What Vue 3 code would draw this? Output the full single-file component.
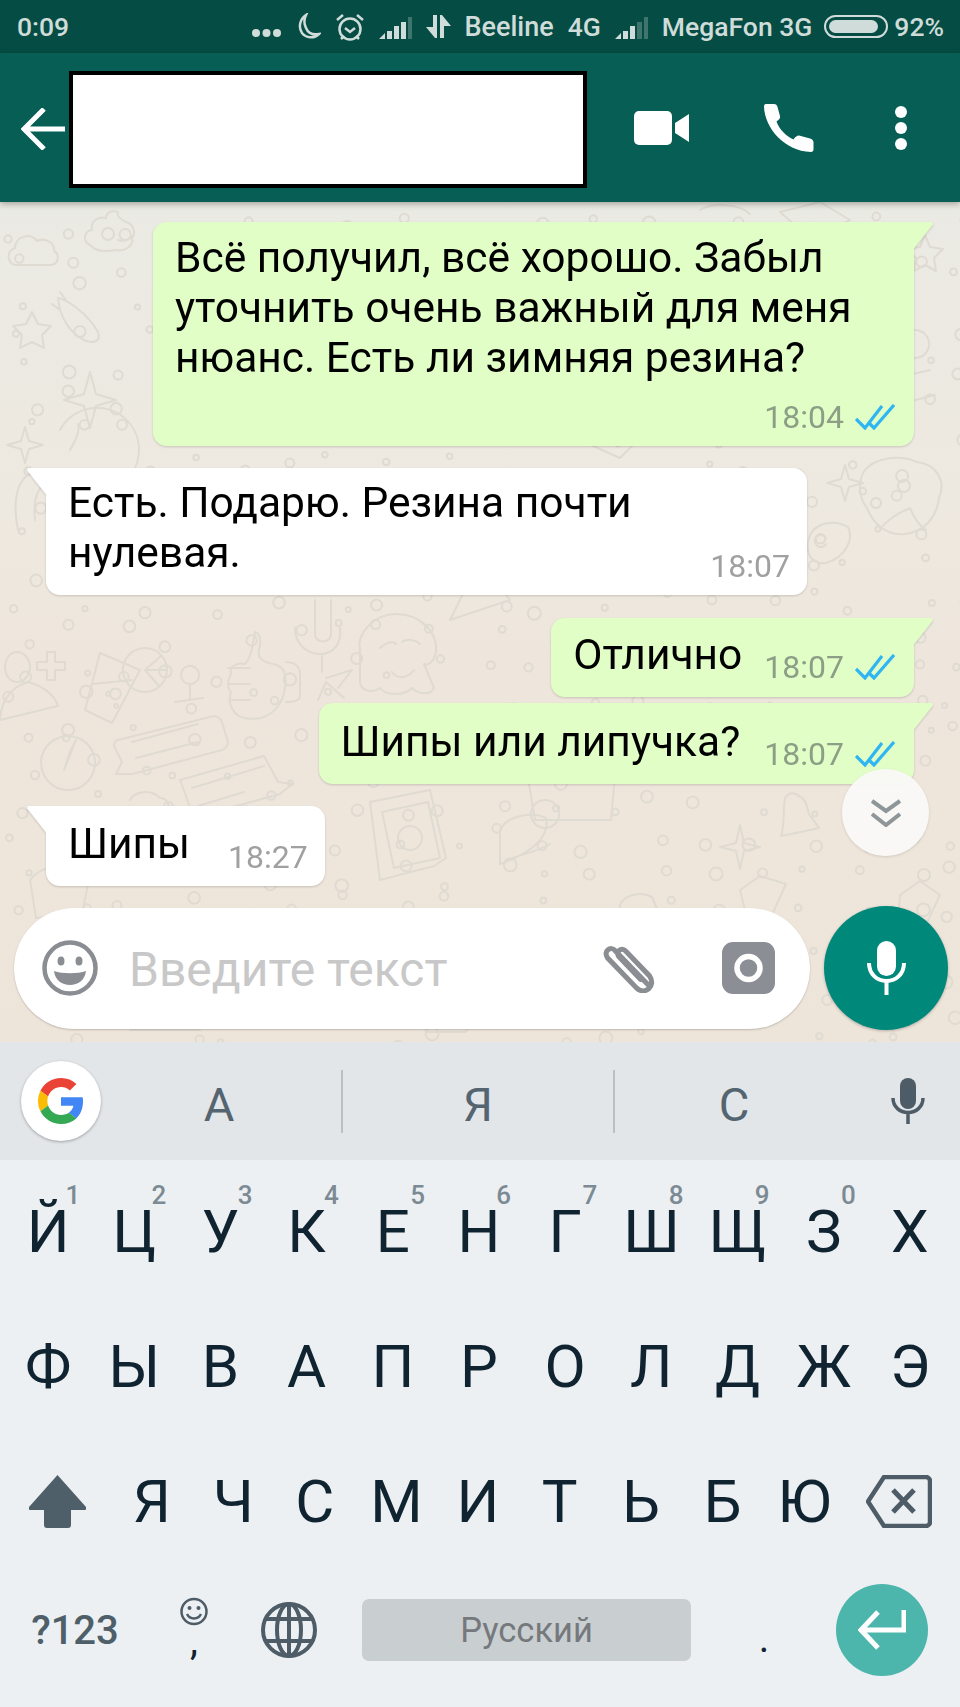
<template>
  <div class="phone">
    <div class="status">
      <span class="clock">0:09</span>
      <div class="status-right">
        <svg class="s-dots" width="29" height="10" viewBox="0 0 29 10"><circle cx="4" cy="5" r="4" /><circle cx="14.5" cy="5" r="4" /><circle cx="25" cy="5" r="4" /></svg>
        <svg class="s-moon" width="24" height="27" viewBox="0 0 24 27"><path d="M9 2C3 6 1 14 5 20c4 5 12 6 17 1-6 1-11-1-13-6C7 11 7 6 9 2z" /></svg>
        <svg class="s-alarm" width="30" height="28" viewBox="0 0 30 28"><circle cx="15" cy="16" r="10.5" /><path d="M10 15l5 4 5-4M2 7l6-5M28 7l-6-5M6 26l3-3M24 26l-3-3" /></svg>
        <svg class="s-signal" width="33" height="22" viewBox="0 0 33 22"><path d="M0 22L6 16V22ZM8 14H13V22H8ZM15 9H20V22H15ZM22 5H27V22H22Z" fill="#cfdcd9" /><path d="M29 0H33V22H29Z" fill="#3f756c" /></svg>
        <svg class="s-arrows" width="25" height="23" viewBox="0 0 25 23"><path d="M7 0H11V23H9L0 12H7ZM14 0H16L25 11H18V23H14Z" fill="#cfdcd9" /></svg>
        <span class="carrier">Beeline</span>
        <span>4G</span>
        <svg class="s-signal" width="33" height="22" viewBox="0 0 33 22"><path d="M0 22L6 16V22ZM8 14H13V22H8ZM15 9H20V22H15Z" fill="#cfdcd9" /><path d="M22 5H27V22H22ZM29 0H33V22H29Z" fill="#3f756c" /></svg>
        <span>MegaFon 3G</span>
        <div class="battery"><div class="battery-fill"></div></div>
        <span>92%</span>
      </div>
    </div>

    <header class="topbar">
      <svg class="back" width="44" height="42" viewBox="0 0 44 42"><path d="M44 21H3M23 1L3 21l20 20" /></svg>
      <div class="hidden-name"></div>
      <svg class="video" width="55" height="34" viewBox="0 0 55 34"><rect width="38" height="34" rx="5" /><path d="M41 12L55 3V31L41 22Z" /></svg>
      <svg class="call" width="50" height="48" viewBox="0 0 50 48"><path d="M2 0h8c2 0 3 1 3.500 3l2.500 9c.5 2-.5 3.500-3.500 5.500 3 8 9 14 17 18 2-3 3.500-4 5.500-4l11 3c2 .5 3.500 2 3.500 4v7c0 1.500-1 2.500-2.500 2.500C20 47 1 24 0 3c0-2 .5-3 2-3z" /></svg>
      <div class="kebab"><i></i><i></i><i></i></div>
    </header>

    <main class="chat">
      <svg class="wallpaper" width="960" height="840" viewBox="0 202 960 840">
        <circle v-for="(c, i) in dots" :key="i" :cx="c.x" :cy="c.y" :r="c.r" />
        <path v-for="(d, i) in doodles" :key="'d' + i" :d="d" />
      </svg>

      <div
        v-for="(m, i) in messages"
        :key="i"
        class="msg"
        :class="[m.out ? 'out' : 'in', m.kind]"
      >
        <div class="text"><template v-for="(l, j) in m.lines" :key="j"><br v-if="j" />{{ l }}</template></div>
        <div class="meta">
          <span class="time">{{ m.time }}</span>
          <svg v-if="m.out" class="ticks" width="40" height="26" viewBox="0 0 40 26"><path d="M1 15l9 9L27 2M15 20l4 4L39 1" /></svg>
        </div>
      </div>

      <button class="to-bottom">
        <svg width="30" height="28" viewBox="0 0 30 28"><path d="M1 2l14 10L29 2M1 15l14 11 14-11" /></svg>
      </button>

      <div class="composer">
        <div class="input">
          <svg class="smile" width="56" height="56" viewBox="0 0 56 56"><circle cx="28" cy="28" r="25.500" fill="none" stroke="#8a8d92" stroke-width="4.500" /><ellipse cx="19" cy="21" rx="3.500" ry="4.500" /><ellipse cx="37" cy="21" rx="3.500" ry="4.500" /><path d="M12 31c8 3 24 3 32 0-1 9-8 14-16 14s-15-5-16-14z" /></svg>
          <span class="placeholder">Введите текст</span>
          <svg class="clip" width="57" height="50" viewBox="3 2 45 44"><path d="M44 40L14 9C10 4 3 9 7 15l26 27c7 6 17-2 11-11L23 9c-4-4-9 1-6 5l19 20" /></svg>
          <svg class="camera" width="53" height="52" viewBox="0 0 53 52"><rect width="53" height="52" rx="11" fill="#8b8e94" /><circle cx="26.500" cy="26" r="11.500" fill="none" stroke="#fff" stroke-width="5.500" /></svg>
        </div>
        <button class="send">
          <svg width="39" height="54" viewBox="0 0 39 54"><rect x="10" width="19" height="35" rx="9.500" fill="#fff" /><path d="M2 22c0 11 8 18 17.500 18S37 33 37 22M19.500 40v14" fill="none" stroke="#fff" stroke-width="4" /></svg>
        </button>
      </div>
    </main>

    <section class="keyboard">
      <div class="suggest">
        <div class="google">
          <svg width="46" height="48" viewBox="0 0 48 48">
            <path fill="#EA4335" d="M24 9.500c3.540 0 6.710 1.220 9.210 3.600l6.850-6.850C35.900 2.380 30.470 0 24 0 14.620 0 6.510 5.380 2.560 13.220l7.980 6.190C12.430 13.720 17.740 9.500 24 9.500z" />
            <path fill="#4285F4" d="M46.980 24.550c0-1.570-.15-3.090-.38-4.550H24v9.020h12.940c-.58 2.960-2.260 5.480-4.780 7.180l7.730 6c4.510-4.180 7.090-10.360 7.090-17.650z" />
            <path fill="#FBBC05" d="M10.530 28.590c-.48-1.450-.76-2.990-.76-4.590s.27-3.140.76-4.590l-7.980-6.190C.92 16.460 0 20.120 0 24c0 3.880.92 7.540 2.560 10.780l7.970-6.190z" />
            <path fill="#34A853" d="M24 48c6.480 0 11.930-2.130 16.010-5.810l-7.730-6c-2.150 1.450-4.920 2.300-8.280 2.300-6.260 0-11.570-4.220-13.470-9.910l-7.980 6.190C6.510 42.620 14.620 48 24 48z" />
          </svg>
        </div>
        <span class="guess first">А</span>
        <span class="guess sep">Я</span>
        <span class="guess sep last">С</span>
        <svg class="kb-mic" width="34" height="46" viewBox="0 0 34 46"><rect x="9" width="16" height="31" rx="8" fill="#4d5c66" /><path d="M2 20c0 9 7 14.500 15 14.500S32 29 32 20M17 34v12" fill="none" stroke="#4d5c66" stroke-width="3.500" /></svg>
      </div>

      <div class="row">
        <div v-for="k in topRow" :key="k.c" class="key">{{ k.c }}<sup class="hint">{{ k.n }}</sup></div>
      </div>
      <div class="row">
        <div v-for="c in midRow" :key="c" class="key">{{ c }}</div>
      </div>
      <div class="row row3">
        <div class="key">
          <svg width="57" height="53" viewBox="0 0 57 53"><path d="M28.500 0L57 32c1 2 0 3-2 3H42v15c0 2-1 3-3 3H18c-2 0-3-1-3-3V35H2c-2 0-3-1-2-3z" fill="#4f5f69" /></svg>
        </div>
        <div v-for="c in lowRow" :key="c" class="key">{{ c }}</div>
        <div class="key">
          <svg class="bksp" width="66" height="53" viewBox="0 0 66 53"><path d="M18 2H60c2 0 4 2 4 4v41c0 2-2 4-4 4H18L2 26.500z" fill="none" stroke="#4d5c66" stroke-width="4.500" stroke-linejoin="round" /><path d="M27 15l21 22M48 15L27 37" fill="none" stroke="#4d5c66" stroke-width="5" /></svg>
        </div>
      </div>
      <div class="row row4">
        <div class="key sym">?123</div>
        <div class="key comma">
          <svg width="28" height="29" viewBox="0 0 28 29"><circle cx="14" cy="14.500" r="12.500" fill="none" stroke="#4d5c66" stroke-width="2.500" /><circle cx="9.500" cy="11" r="2" fill="#4d5c66" /><circle cx="18.500" cy="11" r="2" fill="#4d5c66" /><path d="M7 17c3 6 11 6 14 0" fill="none" stroke="#4d5c66" stroke-width="2.500" /></svg>
          <span>,</span>
        </div>
        <div class="key">
          <svg width="56" height="56" viewBox="0 0 56 56" fill="none" stroke="#4d5c66" stroke-width="4"><circle cx="28" cy="28" r="26" /><ellipse cx="28" cy="28" rx="12" ry="26" /><path d="M28 2v52M5 17h46M5 39h46" /></svg>
        </div>
        <div class="key"><div class="space">Русский</div></div>
        <div class="key period">.</div>
        <div class="key">
          <div class="enter"><svg width="48" height="40" viewBox="0 0 48 40"><path d="M46 0v20H4M20 2L3 20l17 18" fill="none" stroke="#fff" stroke-width="5" /></svg></div>
        </div>
      </div>
    </section>
  </div>
</template>

<script setup>
const messages = [
  { out: true, kind: 'long', lines: ['Всё получил, всё хорошо. Забыл', 'уточнить очень важный для меня', 'нюанс. Есть ли зимняя резина?'], time: '18:04' },
  { out: false, kind: 'long overlap', lines: ['Есть. Подарю. Резина почти', 'нулевая.'], time: '18:07' },
  { out: true, kind: 'short', lines: ['Отлично'], time: '18:07' },
  { out: true, kind: 'short cont', lines: ['Шипы или липучка?'], time: '18:07' },
  { out: false, kind: 'short', lines: ['Шипы'], time: '18:27' },
]

const topRow = [
  { c: 'Й', n: 1 }, { c: 'Ц', n: 2 }, { c: 'У', n: 3 }, { c: 'К', n: 4 }, { c: 'Е', n: 5 }, { c: 'Н', n: 6 },
  { c: 'Г', n: 7 }, { c: 'Ш', n: 8 }, { c: 'Щ', n: 9 }, { c: 'З', n: 0 }, { c: 'Х', n: '' },
]
const midRow = ['Ф', 'Ы', 'В', 'А', 'П', 'Р', 'О', 'Л', 'Д', 'Ж', 'Э']
const lowRow = ['Я', 'Ч', 'С', 'М', 'И', 'Т', 'Ь', 'Б', 'Ю']

// scattered little rings of the wallpaper, seeded so the picture stays the same
let seed = 7
const rnd = () => (seed = (seed * 16807) % 2147483647) / 2147483647
const dots = []
for (let y = 215; y < 1040; y += 34) {
  for (let x = 8; x < 960; x += 52) {
    dots.push({ x: x + rnd() * 40, y: y + rnd() * 26, r: 2.500 + rnd() * 4 })
  }
}

const doodles = [
  'M15 265c-8-2-9-14 0-17 0-12 16-16 22-7 8-4 18 2 17 10 6 3 5 13-3 14z',
  'M90 245c-8-4-6-14 2-15-2-10 8-14 14-12 0-6 6-8 12-6-2 4 4 8 8 10 8 2 10 12 6 16 2 8-8 14-16 12-10 2-20 2-26-5zM108 228a6 6 0 1 0 .1 0M118 240c6 2 12 0 14-4',
  'M58 298c10 2 30 16 40 34 4 10-6 12-14 8-12-6-24-20-26-42zM60 310l-8-6M66 300l-6-8',
  'M32 312l6 12 13 2-9 9 2 13-12-6-12 6 2-13-9-9 13-2z',
  'M90 372l-6 22-20 6 20 6 6 22 6-22 20-6-20-6z',
  'M25 427l4 14 14 4-14 4-4 14-4-14-14-4 14-4z',
  'M60 430a42 42 0 1 1 60 55M70 450c6-10 10-20 8-26',
  'M40 470c-24 4-28 30-22 60M55 480c-18 2-22 20-20 40',
  'M17 652c7 0 13 7 13 15s-6 15-13 15-12-7-12-15 5-15 12-15zM0 720c1-22 14-34 28-38 14 4 26 12 30 24z',
  'M47 652h8v10h10v8H55v10h-8V670H37v-8h10z',
  'M100 653l40 17-28 53-27-13zM92 684l40-4M108 692a2 2 0 1 0 .1 0M116 704a2 2 0 1 0 .1 0',
  'M145 648a22 22 0 1 1-.1 0M145 670l16-14M145 670l22 0M145 670l14 16',
  'M190 666a9 9 0 1 0 .1 0M190 684v16M175 702l28-4',
  'M255 632c6 2 6 10 4 18-2 8 4 12 14 14 12 2 14 12 12 24-2 14-10 26-24 30-14 2-24 0-28-8-4-6-4-12-2-18-4-4-4-12 0-18-2-8 6-12 14-10 6-6 8-20 10-32zM228 668h22M228 684h22M232 700h18M286 662c8 0 14 4 14 12v22c0 4-6 6-14 6',
  'M295 628c0 16 12 26 25 26s22-10 20-26M315 600v34c0 10 16 10 16 0v-34M322 654v18',
  'M318 700l8-18 18 16M338 688l14-18-26 8',
  'M360 650c-4-16 14-36 36-36 24 0 42 18 40 38-2 10-8 14-12 12l10 24c-4 8-16 6-22 0-8 8-26 8-32 0-8 6-20 2-20-6zM380 648c4-4 12-8 16-4M402 642c6-4 14-2 18 2M392 672c6 8 16 6 22-2',
  'M118 740l96-24c4 0 6 2 8 6l6 20c0 4-2 6-6 8l-82 22-8 2-16 0 6-12-8-16c0-4 2-6 4-6zM132 742l66-18M136 758l62-16',
  'M68 724a6 6 0 1 0 .1 0M68 736a27 27 0 1 0 .1 0M70 752l6-12-12 30z',
  'M180 780l84-24 14 26 14 2-12 10-80 22-6 2zM192 788l72-22M198 806l46-14',
  'M130 800c4-8 20-12 30-2 8 0 10 8 8 14',
  'M370 802l60-12 16 68-12 8-54 14zM382 812l46-10 12 56-46 10zM410 826a12 12 0 1 0 .1 0',
  'M525 760l10-4h14l4 8 50 6 12 6-4 44-76 0zM545 800a14 14 0 1 0 .1 0',
  'M785 798c4-6 10-6 14-2 6 2 8 10 10 18l10 14-28 6-10 2c4-12 2-28 4-38z',
  'M500 830c8-16 34-18 46-12 4 18-12 34-46 46zM506 860c12-4 30-8 44-16',
  'M740 825l4 18 16 4-16 4-4 18-4-18-16-4 16-4z',
  'M865 470c10-12 34-16 52-8 18 2 30 18 22 36-2 18-14 34-34 36-18 2-32-10-38-26-10-12-8-30-2-38zM876 498a5 5 0 1 0 .1 0M904 480a6 6 0 1 0 .1 0M880 530c6-10 20-18 30-22 4 10 10 18 16 22',
  'M845 465l4 14 14 4-14 4-4 14-4-14-14-4 14-4z',
  'M810 535c6-12 24-16 38-8 6 12-2 30-22 36-16 2-22-12-16-28zM826 538a6 6 0 1 0 .1 6',
  'M925 235l5 12 13 2-9 9 2 13-11-6-11 6 2-13-9-9 13-2z',
  'M915 330a14 14 0 1 0 .1 0M930 370l-60 14M935 395l-55 14',
  'M700 210c12-8 40-6 50 4M780 212l40-10 30 18-40 18zM580 440c10-12 40-14 60-2l-20 20z',
  'M620 905c4-10 20-14 32-8l10 24-44 6zM420 1000c14-8 46-8 56 2l-10 30h-40zM130 1030l20-50 60 20-10 30z',
  'M740 890l20-14 26 8-20 44-14 10zM900 895l20-14 20 14-14 30-28 0z',
  'M610 640l40-18M430 590c4-10 14-14 28-12M480 560l30 40-60 20z',
  'M30 880c12-16 40-18 60-6l-8 40-46 4zM20 960l18 46M210 920c20-10 50-6 70 6l-20 30-50-6z',
]
</script>

<style>
html,
body {
  margin: 0;
  background: #ecf0f3;
}
</style>

<style scoped>
.phone {
  width: 960px;
  height: 1707px;
  display: flex;
  flex-direction: column;
  overflow: hidden;
  font-family: Roboto, 'Noto Sans', sans-serif;
}

/* status bar */
.status {
  height: 53px;
  flex: none;
  padding: 0 16px 0 17px;
  display: flex;
  align-items: center;
  justify-content: space-between;
  background: #054d44;
  color: #cfdcd9;
  font-size: 26.5px;
  font-weight: 500;
}

.status-right {
  display: flex;
  align-items: center;
  gap: 14px;
}

.carrier {
  font-size: 27px;
}

.s-dots {
  fill: #cfdcd9;
  margin-top: 12px;
  margin-right: 2px;
}

.s-moon {
  fill: none;
  stroke: #cfdcd9;
  stroke-width: 2.5;
}

.s-alarm {
  fill: none;
  stroke: #cfdcd9;
  stroke-width: 2.5;
}

.s-signal {
  margin-top: 2px;
}

.battery {
  width: 64px;
  height: 23px;
  box-sizing: border-box;
  padding: 3px;
  border: 2px solid #cfdcd9;
  border-radius: 12px;
  margin-left: -2px;
  margin-right: -8px;
}

.battery-fill {
  width: 90%;
  height: 100%;
  background: #cfdcd9;
  border-radius: 7px;
}

/* toolbar */
.topbar {
  height: 149px;
  flex: none;
  position: relative;
  z-index: 2;
  display: flex;
  align-items: center;
  background: #075e54;
  box-shadow: 0 2px 6px rgba(0, 0, 0, 0.3);
}

.back {
  margin-left: 21px;
  fill: none;
  stroke: #fff;
  stroke-width: 5;
  margin-top: 3px;
}

.hidden-name {
  width: 518px;
  height: 117px;
  box-sizing: border-box;
  margin-left: 4px;
  margin-top: 4px;
  background: #fff;
  border: 4px solid #000;
}

.video {
  fill: #fff;
  margin-left: 47px;
}

.call {
  fill: #fff;
  margin-left: 75px;
}

.kebab {
  margin-left: 81px;
  display: flex;
  flex-direction: column;
  gap: 4px;
}

.kebab i {
  width: 12px;
  height: 12px;
  border-radius: 50%;
  background: #fff;
}

/* conversation */
.chat {
  flex: 1;
  position: relative;
  padding-top: 20px;
  display: flex;
  flex-direction: column;
  overflow: hidden;
  background: linear-gradient(180deg, #eaeae4 0%, #eee9e0 35%, #eee6dc 55%, #eee5da 100%);
}

.wallpaper {
  position: absolute;
  top: 0;
  left: 0;
  fill: none;
  stroke: #dfdbd2;
  stroke-width: 2;
  stroke-linejoin: round;
  stroke-linecap: round;
}

.msg {
  position: relative;
  border-radius: 14px;
  filter: drop-shadow(0 1px 1px rgba(0, 0, 0, 0.16));
  color: #000;
  font-size: 42.5px;
  line-height: 50px;
}

.msg.out {
  align-self: flex-end;
  margin-right: 46px;
  background: #e1fec6;
  border-top-right-radius: 0;
  padding: 11px 19px 11px 22px;
}

.msg.in {
  align-self: flex-start;
  margin-left: 46px;
  background: #fff;
  border-top-left-radius: 0;
  padding: 10px 17px 11px 22px;
}

.msg.out::before,
.msg.in::before {
  content: '';
  position: absolute;
  top: 0;
  width: 21px;
  height: 29px;
  background: inherit;
}

.msg.out::before {
  right: -19px;
  clip-path: polygon(0 0, 95% 0, 100% 8%, 0 100%);
}

.msg.in::before {
  left: -19px;
  clip-path: polygon(100% 0, 5% 0, 0 8%, 100% 100%);
}

/* the wide messages, and the one after a run of them */
.msg.long {
  width: 761px;
  box-sizing: border-box;
  margin-bottom: 22px;
}

.msg.long .meta {
  justify-content: flex-end;
  margin-top: 16px;
}

.msg.overlap {
  margin-bottom: 23px;
}

.msg.overlap .meta {
  margin-top: -30px;
}

.msg.short {
  display: flex;
  gap: 22px;
  padding-top: 12px;
  padding-bottom: 12px;
  margin-bottom: 22px;
}

.msg.short.in {
  gap: 38px;
  padding-top: 13px;
  padding-bottom: 11px;
  margin-bottom: 0;
}

.msg.short .meta {
  margin-top: 19px;
}

.msg.short.in .meta {
  margin-top: 20px;
}

.msg.short.cont {
  gap: 24px;
  margin-top: -16px;
  padding-top: 14px;
  margin-bottom: 22px;
}

.meta {
  display: flex;
  align-items: center;
  gap: 11px;
}

.time {
  font-size: 32px;
  line-height: 36px;
  color: #8c9e85;
}

.in .time {
  color: #a0a0a0;
}

.ticks {
  fill: none;
  stroke: #2fb5f2;
  stroke-width: 3.2;
}

.to-bottom {
  position: absolute;
  left: 842px;
  top: 567px;
  width: 87px;
  height: 87px;
  padding: 0;
  border: 0;
  border-radius: 50%;
  display: flex;
  align-items: center;
  justify-content: center;
  background: rgba(249, 249, 248, 0.95);
  box-shadow: 0 1px 3px rgba(0, 0, 0, 0.12);
}

.to-bottom svg {
  fill: none;
  stroke: #8f9699;
  stroke-width: 4;
}

.composer {
  position: absolute;
  left: 14px;
  top: 704px;
  width: 935px;
  display: flex;
  align-items: center;
  gap: 14px;
}

.input {
  width: 796px;
  height: 121px;
  box-sizing: border-box;
  flex: none;
  border-radius: 61px;
  background: #fff;
  box-shadow: 0 1px 2px rgba(0, 0, 0, 0.2);
  display: flex;
  align-items: center;
  padding-left: 28px;
}

.smile {
  fill: #8a8d92;
}

.placeholder {
  margin-left: 31px;
  width: 471px;
  font-size: 48px;
  color: #c8c8c8;
  margin-top: 2px;
}

.clip {
  fill: none;
  stroke: #8a8d92;
  stroke-width: 4.5;
  stroke-linecap: round;
}

.camera {
  margin-left: 65px;
}

.send {
  width: 124px;
  height: 124px;
  flex: none;
  padding: 0;
  border: 0;
  border-radius: 50%;
  background: #00897b;
  display: flex;
  align-items: center;
  justify-content: center;
  box-shadow: 0 1px 3px rgba(0, 0, 0, 0.25);
}

/* keyboard */
.keyboard {
  height: 665px;
  flex: none;
  background: #ecf0f3;
  color: #102330;
}

.suggest {
  height: 118px;
  position: relative;
  display: flex;
  align-items: center;
  background: #e2e6e9;
}

.google {
  width: 80px;
  height: 80px;
  margin-left: 21px;
  border-radius: 50%;
  background: #fff;
  box-shadow: 0 1px 3px rgba(0, 0, 0, 0.3);
  display: flex;
  align-items: center;
  justify-content: center;
}

.guess {
  width: 272px;
  height: 63px;
  line-height: 69px;
  text-align: center;
  font-size: 47px;
  color: #546470;
  box-sizing: border-box;
}

.guess.first {
  width: 244px;
  margin-left: -4px;
}

.guess.last {
  width: 240px;
}

.guess.sep {
  border-left: 2px solid #b9c1c6;
}

.kb-mic {
  position: absolute;
  left: 891px;
  top: 36px;
}

.row {
  display: grid;
  grid-template-columns: repeat(11, 1fr);
  height: 135px;
  padding: 0 7px 0 5px;
}

.row:nth-child(2) {
  margin-top: 4px;
}

.row3 {
  grid-template-columns: 107px repeat(9, 1fr) 109px;
  padding: 0 6px 0 4px;
}

.row4 {
  grid-template-columns: 142px 96px 94px 381px 94px 142px;
  height: 122px;
  padding: 0 4px;
}

.key {
  position: relative;
  display: flex;
  align-items: center;
  justify-content: center;
  font-size: 60px;
}

.bksp {
  margin-left: -2px;
}

.hint {
  position: absolute;
  top: 17px;
  right: 11px;
  font-size: 26px;
  line-height: 28px;
  font-weight: 500;
  color: #7c8a93;
}

.sym {
  font-size: 40px;
  font-weight: 500;
  color: #4f5f69;
}

.comma {
  flex-direction: column;
  font-size: 40px;
  line-height: 30px;
  gap: 0;
  padding-bottom: 8px;
}

.space {
  width: 329px;
  height: 62px;
  border-radius: 7px;
  background: #c9ced1;
  color: #75797c;
  font-size: 34.5px;
  line-height: 62px;
  text-align: center;
}

.period {
  font-size: 40px;
  padding-top: 16px;
}

.enter {
  width: 92px;
  height: 92px;
  border-radius: 50%;
  background: #4db6ac;
  display: flex;
  align-items: center;
  justify-content: center;
}
</style>
